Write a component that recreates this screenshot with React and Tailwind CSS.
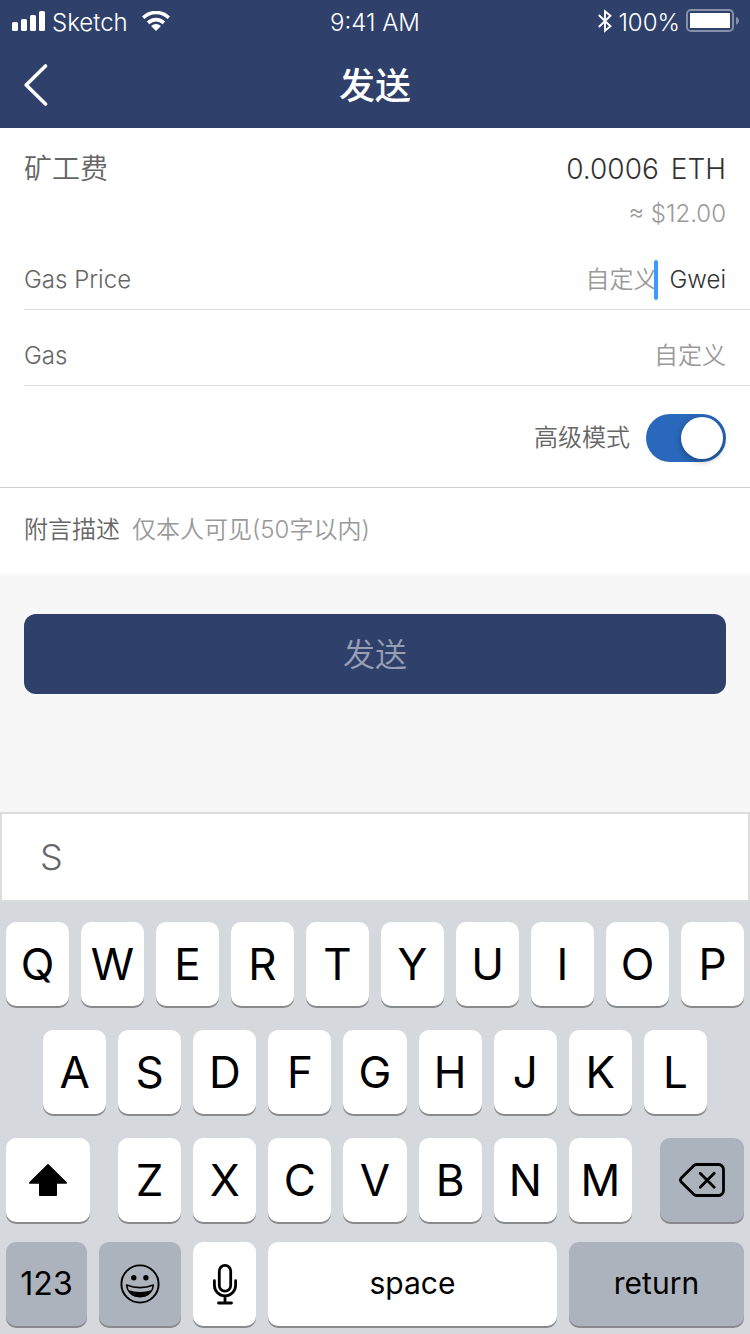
import React, { useState } from "react";

const SignalIcon = () => (
  <svg width="34" height="22" viewBox="0 0 34 22" fill="currentColor" aria-hidden="true">
    <rect x="0" y="12" width="6" height="9" rx="1.6" />
    <rect x="9" y="9" width="6" height="12" rx="1.6" />
    <rect x="18" y="5" width="6" height="16" rx="1.6" />
    <rect x="27" y="1" width="6" height="20" rx="1.6" />
  </svg>
);

const WifiIcon = () => (
  <svg width="28" height="20" viewBox="0 0 28 20" aria-hidden="true">
    <g fill="none" stroke="currentColor" strokeWidth="3.6">
      <path d="M1.200 6.800a18.200 18.200 0 0 1 25.600 0" />
      <path d="M6.100 11.900a11.200 11.200 0 0 1 15.800 0" />
    </g>
    <path d="M14 20l-4.900-4.900a7 7 0 0 1 9.800 0z" fill="currentColor" />
  </svg>
);

const BluetoothIcon = () => (
  <svg width="14" height="24" viewBox="0 0 14 24" fill="none" stroke="currentColor" strokeWidth="1.900" aria-hidden="true">
    <path d="M.800 6l11.700 11.200L7 21.800V2.200l5.500 4.600L.800 18" />
  </svg>
);

const BatteryIcon = () => (
  <svg width="54" height="24" viewBox="0 0 54 24" aria-hidden="true">
    <rect x="1" y="1" width="46" height="21" rx="4" fill="none" stroke="currentColor" strokeWidth="2" opacity=".42" />
    <rect x="4" y="4" width="40" height="15" rx=".6" fill="currentColor" />
    <path d="M50 8c2 .6 3 2 3 3.700s-1 3.100-3 3.800z" fill="currentColor" opacity=".42" />
  </svg>
);

const BackIcon = () => (
  <svg width="24" height="42" viewBox="0 0 24 42" fill="none" stroke="currentColor" strokeWidth="3.600" strokeLinecap="round" strokeLinejoin="round" aria-hidden="true">
    <path d="M21.500 2L2.200 21l19.300 19" />
  </svg>
);

const ShiftIcon = () => (
  <svg width="38" height="32" viewBox="0 0 38 32" fill="currentColor" stroke="currentColor" strokeWidth="1.600" strokeLinejoin="round" aria-hidden="true">
    <path d="M19 .8L.8 18.900h10v12.300h16.400V18.900h10z" />
  </svg>
);

const DeleteIcon = () => (
  <svg width="46" height="34" viewBox="0 0 46 34" fill="none" stroke="currentColor" strokeWidth="2.800" strokeLinecap="round" strokeLinejoin="round" aria-hidden="true">
    <path d="M17.500 1.500H39.500a5 5 0 0 1 5 5v21a5 5 0 0 1-5 5H17.500q-1.700 0-2.900-1.200L2.300 19q-1.700-2 0-4L14.600 2.700q1.200-1.200 2.900-1.200z" />
    <path d="M21.200 10.200l14 14M35.200 10.200l-14 14" />
  </svg>
);

const EmojiIcon = () => (
  <svg width="40" height="40" viewBox="0 0 40 40" aria-hidden="true">
    <circle cx="20" cy="20" r="18.600" fill="none" stroke="currentColor" strokeWidth="1.900" />
    <circle cx="13.800" cy="13.700" r="2.700" fill="currentColor" />
    <circle cx="25.900" cy="13.700" r="2.700" fill="currentColor" />
    <path d="M6.600 21Q20 26.200 33.400 21C32.400 28.800 27 32.600 20 32.600S7.600 28.800 6.600 21z" fill="none" stroke="currentColor" strokeWidth="1.600" strokeLinejoin="round" />
    <path d="M8 26Q20 30.200 32 26C30 31.200 25.500 33.200 20 33.200S10 31.200 8 26z" fill="currentColor" />
  </svg>
);

const MicIcon = () => (
  <svg width="24" height="41" viewBox="0 0 24 41" fill="none" stroke="currentColor" strokeWidth="2.800" strokeLinecap="round" aria-hidden="true">
    <rect x="6.300" y="1.400" width="11.400" height="25.800" rx="5.700" />
    <path d="M1.400 16.700v4.600a10.600 10.600 0 0 0 21.200 0v-4.600M12 32v6.500M5.500 39h13" />
  </svg>
);

function Key({ children, dark = false, size = "text-[44px]", className = "flex-1", label }) {
  return (
    <button
      type="button"
      aria-label={label}
      className={`flex h-[84px] min-w-0 items-center justify-center rounded-[10px] font-[380] text-black shadow-[0_2px_0_#898a8d] ${size} ${className} ${dark ? "bg-[#acb3bd]" : "bg-white"}`}
    >
      {children}
    </button>
  );
}

const letters = (row) => row.split("").map((c) => <Key key={c}>{c}</Key>);

function Keyboard() {
  return (
    <div className="bg-[#d5d8dd] px-1.5 pt-5 pb-2">
      <div className="flex gap-3">{letters("QWERTYUIOP")}</div>
      <div className="mt-6 flex gap-3 px-[37px]">{letters("ASDFGHJKL")}</div>
      <div className="mt-6 flex gap-7">
        <Key className="w-[84px]" label="shift"><ShiftIcon /></Key>
        <div className="flex flex-1 gap-3">{letters("ZXCVBNM")}</div>
        <Key dark className="w-[84px]" label="delete"><DeleteIcon /></Key>
      </div>
      <div className="mt-5 flex gap-3">
        <Key dark size="text-[32px]" className="w-[81px]">123</Key>
        <Key dark className="w-[82px]" label="emoji"><EmojiIcon /></Key>
        <Key className="w-[63px]" label="dictate"><MicIcon /></Key>
        <Key size="text-[30px]" className="flex-1">space</Key>
        <Key dark size="text-[30px]" className="w-[175px]">return</Key>
      </div>
    </div>
  );
}

export default function App() {
  const [advanced, setAdvanced] = useState(true);
  return (
    <div className="flex min-h-screen flex-col bg-[#f7f7f7] font-['Inter','Noto_Sans_CJK_SC',sans-serif] text-2xl font-[350] text-[#666]">
      <header className="bg-[#2f406b] text-white">
        <div className="grid h-[42px] grid-cols-[1fr_auto_1fr] items-center px-3">
          <div className="flex items-center gap-1.5">
            <SignalIcon />
            <span className="pt-1">Sketch</span>
            <span className="pl-2"><WifiIcon /></span>
          </div>
          <time className="pt-1">9:41 AM</time>
          <div className="-mr-0.5 flex items-center justify-end gap-1.5">
            <BluetoothIcon />
            <span className="pt-1">100%</span>
            <BatteryIcon />
          </div>
        </div>
        <div className="grid h-[86px] grid-cols-[1fr_auto_1fr] items-center px-6">
          <button type="button" aria-label="返回" className="justify-self-start"><BackIcon /></button>
          <h1 className="pt-0.5 text-4xl font-medium">发送</h1>
        </div>
      </header>

      <main className="flex-1">
        <form onSubmit={(e) => e.preventDefault()}>
          <div className="bg-white">
            <div className="flex h-[60px] items-center justify-between px-6 pt-6 text-[28px]">
              <span>矿工费</span>
              <span className="flex gap-3 text-[#333]"><span>0.0006</span><span>ETH</span></span>
            </div>
            <p className="mt-1.5 flex h-10 items-center justify-end px-6 text-[#999]">≈ $12.00</p>
            <div className="ml-6 flex h-[76px] items-center border-b border-[#dcdcdc] pt-4 pr-6">
              <label htmlFor="gas-price">Gas Price</label>
              <div className="relative ml-auto flex items-center">
                <input id="gas-price" placeholder="自定义" className="w-60 text-right outline-none placeholder:text-[#999]" />
                <span className="absolute right-0 h-10 w-1 rounded-full bg-[#3d9bff]" />
              </div>
              <span className="ml-3 text-[#333]">Gwei</span>
            </div>
            <div className="ml-6 flex h-[76px] items-center justify-between border-b border-[#dcdcdc] pt-4 pr-6">
              <label htmlFor="gas">Gas</label>
              <input id="gas" placeholder="自定义" className="w-60 text-right outline-none placeholder:text-[#999]" />
            </div>
            <div className="flex items-center justify-end gap-4 border-b border-[#ccc] px-6 pt-7 pb-[25px]">
              <label htmlFor="advanced">高级模式</label>
              <input
                id="advanced"
                type="checkbox"
                role="switch"
                checked={advanced}
                onChange={(e) => setAdvanced(e.target.checked)}
                className="flex h-12 w-20 appearance-none items-center rounded-full bg-[#ccc] px-[3px] before:size-[42px] before:rounded-full before:bg-white before:shadow-[0_2px_6px_rgba(0,0,0,0.35)] checked:justify-end checked:bg-[#2968ba]"
              />
            </div>
            <div className="flex h-[86px] items-center gap-3 px-6 pb-0.5">
              <label htmlFor="memo">附言描述</label>
              <input id="memo" placeholder="仅本人可见(50字以内)" className="min-w-0 flex-1 outline-none placeholder:text-[#999]" />
            </div>
          </div>
          <div className="px-6 py-10">
            <button type="submit" className="h-20 w-full rounded-xl bg-[#2f406b] pt-0.5 text-[32px] text-white/50">发送</button>
          </div>
        </form>
      </main>

      <footer>
        <div className="flex h-[90px] items-center border-2 border-[#dcdcdc] bg-white px-[38px] text-4xl font-light">S</div>
        <Keyboard />
      </footer>
    </div>
  );
}
